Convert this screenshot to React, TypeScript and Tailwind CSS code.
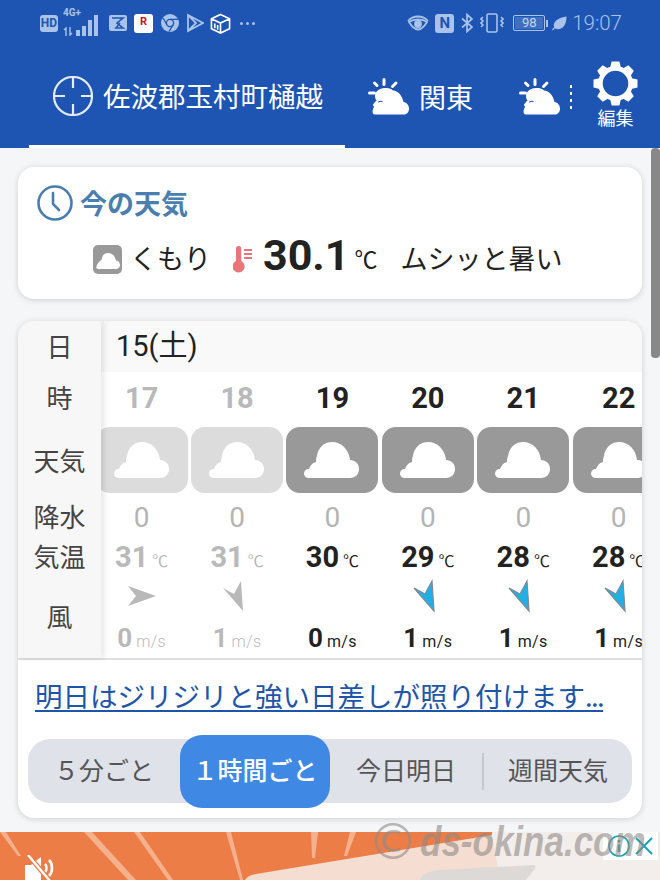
const cols = [
  { hour: "17", temp: "31", wind: "0", past: true, arrow: "right" },
  { hour: "18", temp: "31", wind: "1", past: true, arrow: "se" },
  { hour: "19", temp: "30", wind: "0", past: false, arrow: "none" },
  { hour: "20", temp: "29", wind: "1", past: false, arrow: "se" },
  { hour: "21", temp: "28", wind: "1", past: false, arrow: "se" },
  { hour: "22", temp: "28", wind: "1", past: false, arrow: "se" },
];

const CLOUD =
  "M23 51H64C69.5 51 73 47 73 42C73 36.5 69 33 64 33C63 23 56 15 46 15C38 15 32 21 31 29C30 31 30 33 30 35C26 36 24 39 23 42C20 42 18 44 18 46.5C18 49 20 51 23 51Z";

function SunCloud({ className }: { className: string }) {
  return (
    <svg viewBox="0 0 42 38" className={className} fill="white">
      <path d="M7 36.5H36C39 36.5 41 34 41 30.5C41 27 38.5 24.5 35.5 24C34 17 30 13 25 12.5C23.5 10.5 20 10 17 10C11 10 7 14 7 18C7 20.5 8 22.5 10 24C7 26.5 5 30 4.5 33C4.5 35 5 36.5 7 36.5Z" />
      <path d="M9.5 24.5C11 23.5 13 23 14.5 23.5" fill="none" stroke="#1e55b3" strokeWidth="1.2" />
      <path d="M16 1.5V6.5M6.5 5L9 7.5M1.5 15H6.5M6.5 27L9 24M28 5L24.5 8.5" stroke="white" strokeWidth="3" strokeLinecap="round" />
    </svg>
  );
}

function Gear() {
  return (
    <svg viewBox="0 0 44 44" className="w-[45px] h-[45px]">
      <circle cx="22" cy="22" r="14.75" fill="none" stroke="white" strokeWidth="4.5" />
      {[0, 45, 90, 135, 180, 225, 270, 315].map((a) => (
        <path key={a} d="M16.5 7.5L18.2 0.5H25.8L27.5 7.5Z" fill="white" transform={`rotate(${a} 22 22)`} />
      ))}
    </svg>
  );
}

function WindArrow({ kind, past }: { kind: string; past: boolean }) {
  if (kind === "none") return <div className="w-[30px] h-[34px]" />;
  if (kind === "right")
    return (
      <svg viewBox="0 0 30 34" className="w-[30px] h-[34px]">
        <polygon points="1,7 29,17 1,27 9,17" fill="#b9b9b9" />
      </svg>
    );
  return (
    <svg viewBox="0 0 30 34" className="w-[30px] h-[34px]">
      <polygon
        points="21,32 1,9 12,15 19,2"
        fill={past ? "#b9b9b9" : "#1fb0e8"}
        stroke={past ? "none" : "#7d8a94"}
        strokeWidth="1.2"
      />
    </svg>
  );
}

function StatusBar() {
  return (
    <div className="h-[46px] flex items-center pl-[40px] pr-[38px] text-[#a9c3ea] font-['Roboto',sans-serif]">
      <div className="w-[18px] h-[17px] rounded-[3px] bg-[#a9c3ea] text-[#1e55b3] text-[12px] font-bold leading-[17px] text-center">HD</div>
      <div className="ml-[5px] w-[38px] h-[26px] flex items-end gap-[2px] relative">
        <span className="absolute left-0 top-[-2px] text-[10px] font-bold leading-[10px]">4G+</span>
        <svg viewBox="0 0 10 9" className="absolute left-0 bottom-0 w-[10px] h-[9px]" fill="none" stroke="#a9c3ea" strokeWidth="1.4">
          <path d="M3 9V1L1 3M7 0V8L9 6" />
        </svg>
        <div className="ml-[13px] w-[4px] h-[6px] bg-[#a9c3ea]" />
        <div className="w-[4px] h-[10px] bg-[#a9c3ea]" />
        <div className="w-[4px] h-[16px] bg-[#a9c3ea]" />
        <div className="w-[4px] h-[21px] bg-[#a9c3ea]" />
      </div>
      <svg viewBox="0 0 18 16" className="ml-[8px] w-[18px] h-[16px]">
        <rect width="18" height="16" rx="2" fill="#a9c3ea" />
        <path d="M3 3H14L8 8L14 13H7L11 8" fill="none" stroke="#1e55b3" strokeWidth="1.6" />
      </svg>
      <div className="ml-[7px] w-[19px] h-[19px] rounded-[3px] bg-white text-[#c8102e] text-[11px] font-bold leading-[15px] text-center">R</div>
      <svg viewBox="0 0 18 18" className="ml-[8px] w-[18px] h-[18px]">
        <circle cx="9" cy="9" r="9" fill="#a9c3ea" />
        <circle cx="9" cy="9" r="3.6" fill="#a9c3ea" stroke="#1e55b3" strokeWidth="1.3" />
        <path d="M9 5.4H17M5.9 10.8L2 4M12.1 10.8L8 17.6" stroke="#1e55b3" strokeWidth="1.2" fill="none" />
      </svg>
      <svg viewBox="0 0 18 20" className="ml-[7px] w-[18px] h-[20px]" fill="none" stroke="#a9c3ea" strokeWidth="1.8">
        <path d="M2 2L17 10L2 18ZM2 2L10 10L2 18M6 14L10 10L6 6" />
      </svg>
      <svg viewBox="0 0 22 22" className="ml-[6px] w-[21px] h-[21px]" fill="none" stroke="white" strokeWidth="1.7">
        <path d="M11 1.5L20.5 6V16.5L11 21L1.5 16.5V6ZM1.5 6L11 10.5L20.5 6M11 10.5V21M5 11V16M8 12.5V17.5" />
      </svg>
      <div className="ml-[9px] flex gap-[3px]">
        <div className="w-[3px] h-[3px] rounded-full bg-[#a9c3ea]" />
        <div className="w-[3px] h-[3px] rounded-full bg-[#a9c3ea]" />
        <div className="w-[3px] h-[3px] rounded-full bg-[#a9c3ea]" />
      </div>
      <div className="ml-auto flex items-center">
        <svg viewBox="0 0 22 16" className="w-[22px] h-[16px]" fill="none" stroke="#a9c3ea" strokeWidth="1.8">
          <path d="M1 6C4 2.5 7 1.5 11 1.5S18 2.5 21 6" />
          <path d="M2 7C5 12 8 14.5 11 14.5S17 12 20 7C17 5 14 4.5 11 4.5S5 5 2 7Z" />
          <circle cx="11" cy="9" r="3" fill="#a9c3ea" />
        </svg>
        <div className="ml-[6px] w-[19px] h-[19px] rounded-[3px] bg-[#a9c3ea] text-[#1e55b3] text-[15px] font-bold leading-[19px] text-center">N</div>
        <svg viewBox="0 0 12 20" className="ml-[7px] w-[12px] h-[20px]" fill="none" stroke="#a9c3ea" strokeWidth="1.7">
          <path d="M1 5.5L11 14L6 18.5V1.5L11 6L1 14.5" />
        </svg>
        <svg viewBox="0 0 24 20" className="ml-[7px] w-[24px] h-[20px]" fill="none" stroke="#a9c3ea" strokeWidth="1.6">
          <rect x="7" y="1" width="10" height="18" rx="1.5" />
          <path d="M3 4L1 6L3 8L1 10L3 12L1 14M21 4L23 6L21 8L23 10L21 12L23 14" />
        </svg>
        <div className="ml-[9px] w-[32px] h-[16px] border border-[#a9c3ea] rounded-[2px] p-[1px]">
          <div className="h-full bg-[#3f6fbe] text-[#c4d6f1] text-[13px] leading-[12px] text-center">98</div>
        </div>
        <div className="ml-[1px] w-[2px] h-[7px] bg-[#a9c3ea]" />
        <svg viewBox="0 0 16 16" className="ml-[4px] w-[15px] h-[15px]" fill="#a9c3ea">
          <path d="M15.5 0.5C15.5 9 12 14 6 14C4.5 14 3.5 13.5 3 13L1 15.5L0 14.5L2.3 12C1 8 3 2.5 15.5 0.5Z" />
        </svg>
        <span className="ml-[5px] text-[20.5px] leading-none font-light">19:07</span>
      </div>
    </div>
  );
}

function Header() {
  return (
    <div className="h-[148px] shrink-0 bg-[#1e55b3] text-white flex flex-col">
      <StatusBar />
      <div className="flex-1 flex">
        <div className="ml-[29px] w-[316px] h-[102px] border-b-[3px] border-white flex items-center pl-[24px] gap-[10px] pt-[1px]">
          <svg viewBox="0 0 40 40" className="w-[40px] h-[40px]" fill="none" stroke="#e4ecf8" strokeWidth="2.2">
            <circle cx="20" cy="20" r="19" />
            <path d="M20 1V12M20 28V39M1 20H12M28 20H39" />
          </svg>
          <span className="text-[27.5px] leading-none whitespace-nowrap">佐波郡玉村町樋越</span>
        </div>
        <div className="ml-[23px] w-[151px] flex items-center">
          <SunCloud className="w-[42px] h-[38px]" />
          <span className="ml-[9px] pb-[2px] text-[27px] leading-none">関東</span>
        </div>
        <SunCloud className="w-[42px] h-[38px] self-center" />
        <div className="ml-[9px] self-center flex flex-col gap-[4px]">
          <div className="w-[2px] h-[3px] bg-white" />
          <div className="w-[2px] h-[3px] bg-white" />
          <div className="w-[2px] h-[3px] bg-white" />
          <div className="w-[2px] h-[3px] bg-white" />
        </div>
        <div className="ml-[21px] w-[45px] pt-[15px] flex flex-col items-center">
          <Gear />
          <span className="text-[18px] leading-[22px] whitespace-nowrap">編集</span>
        </div>
      </div>
    </div>
  );
}

function NowCard() {
  return (
    <div className="h-[132px] bg-white rounded-[16px] shadow-[0_1px_6px_rgba(0,0,0,0.16)] pt-[18px] pl-[19px]">
      <div className="flex items-center h-[36px]">
        <svg viewBox="0 0 36 36" className="w-[36px] h-[36px]" fill="none" stroke="#4a7eae" strokeWidth="2.6">
          <circle cx="18" cy="18" r="16.5" />
          <path d="M16 8V19L22 25" strokeLinecap="round" />
        </svg>
        <span className="ml-[7px] pb-[2px] text-[27px] leading-none font-bold text-[#4a7eae]">今の天気</span>
      </div>
      <div className="mt-[10px] pl-[56px] flex items-center h-[56px] text-[#222]">
        <svg viewBox="0 0 29 29" className="w-[29px] h-[29px]">
          <rect width="29" height="29" rx="5" fill="#999" />
          <path d="M5 24H23C25.5 24 27 22 27 20C27 17.5 25 15.5 23 15.5C22 11 19 8 15 8C11 8 9 11 8.5 15C6 16 5 18 4 20C3 22 3 24 5 24Z" fill="white" />
        </svg>
        <span className="ml-[8px] pb-[3px] text-[27px] leading-none">くもり</span>
        <svg viewBox="0 0 20 28" className="ml-[22px] w-[20px] h-[28px]">
          <path d="M3 3.5a2.6 2.6 0 0 1 5.2 0V16a6 6 0 1 1-5.2 0Z" fill="#e8747c" />
          <path d="M11 5H19M11 9H19M11 13H19" stroke="#e8747c" strokeWidth="2" />
        </svg>
        <span className="ml-[10px] pb-[8px] text-[43px] leading-none font-bold font-['Roboto','Liberation_Sans',sans-serif]">30.1</span>
        <span className="ml-[5px] pb-[1px] text-[23px] leading-none">℃</span>
        <span className="ml-[23px] pb-[3px] text-[27px] leading-none whitespace-nowrap">ムシッと暑い</span>
      </div>
    </div>
  );
}

function ForecastTable() {
  return (
    <div className="flex h-[337px] border-b-2 border-[#dfdfdf] box-content">
      <div className="w-[83px] shrink-0 bg-[#f7f7f7] text-[#444] text-[26px] leading-none flex flex-col items-center z-10 shadow-[3px_0_6px_rgba(0,0,0,0.1)]">
        <div className="h-[51px] pb-[2px] flex items-center">日</div>
        <div className="h-[53px] pb-[4px] flex items-center">時</div>
        <div className="h-[74px] pb-[4px] flex items-center">天気</div>
        <div className="h-[40px] pb-[6px] flex items-center">降水</div>
        <div className="h-[40px] pb-[6px] flex items-center">気温</div>
        <div className="h-[79px] pb-[6px] flex items-center">風</div>
      </div>
      <div className="flex-1 min-w-0 overflow-hidden flex flex-col">
        <div className="h-[51px] shrink-0 bg-[#f9f9f9] pl-[15px] flex items-center text-[29px] leading-none text-[#222] font-['Roboto','Noto_Sans_CJK_JP',sans-serif]">15(土)</div>
        <div className="flex -ml-[7px]">
          {cols.map((c) => (
            <div
              key={c.hour}
              className={`w-[95.4px] shrink-0 flex flex-col items-center font-['Roboto','Noto_Sans_CJK_JP',sans-serif] ${c.past ? "text-[#b9b9b9]" : "text-[#222]"}`}
            >
              <div className="h-[53px] flex items-center text-[29px] font-bold leading-none">{c.hour}</div>
              <div className="mt-[2px] w-[92px] h-[66px] rounded-[14px] overflow-hidden">
                <svg viewBox="0 0 92 66" className="w-[92px] h-[66px]">
                  <rect width="92" height="66" fill={c.past ? "#dcdcdc" : "#999999"} />
                  <path d={CLOUD} fill="white" />
                </svg>
              </div>
              <div className="h-[48px] pt-[1px] flex items-center text-[28px] leading-none text-[#b4b4b4]">0</div>
              <div className="h-[32px] flex items-baseline">
                <span className="text-[29px] font-bold leading-[32px]">{c.temp}</span>
                <span className="ml-[4px] text-[16px] leading-none">℃</span>
              </div>
              <div className="h-[46px] flex items-center">
                <WindArrow kind={c.arrow} past={c.past} />
              </div>
              <div className="h-[38px] flex items-baseline">
                <span className="text-[26px] font-bold leading-[38px]">{c.wind}</span>
                <span className={`ml-[4px] text-[16px] leading-none tracking-[0.4px] ${c.past ? "font-light" : ""}`}>m/s</span>
              </div>
            </div>
          ))}
        </div>
      </div>
    </div>
  );
}

function RangeTabs() {
  return (
    <div className="mx-[10px] h-[64px] mt-[27px] rounded-[22px] bg-[#dfe2e9] flex items-center text-[25px] leading-none text-[#555]">
      <div className="w-[152px] pb-[3px] text-center whitespace-nowrap">５分ごと</div>
      <div className="w-[150px] h-[73px] pb-[3px] rounded-[22px] bg-[#3f88e4] text-white font-medium flex items-center justify-center whitespace-nowrap">１時間ごと</div>
      <div className="w-[152px] pb-[3px] text-center whitespace-nowrap">今日明日</div>
      <div className="w-[2px] h-[37px] bg-[#c4c8cf]" />
      <div className="w-[148px] pb-[3px] text-center whitespace-nowrap">週間天気</div>
    </div>
  );
}

function AdBanner() {
  return (
    <div className="h-[48px] mt-[14px] relative bg-[#ec7d47] overflow-hidden">
      <svg viewBox="0 0 660 48" className="absolute inset-0 w-[660px] h-[48px]">
        <path d="M0 0L18 24L21 24L6 0ZM84 0L128 48H136L92 0ZM134 0L168 48H173L140 0ZM226 0L240 48H243L231 0ZM311 0L312 26L315 26L318 0ZM350 0L344 24L347 24L356 0Z" fill="#f5b08c" />
        <path d="M245 48C247 45 250 43 256 42L492 3V0H660V48Z" fill="#f6ddd2" />
        <path d="M492 3V0H660V48H500Z" fill="#f3eeeb" />
        <path d="M420 48C422 42 428 39 440 38L534 33C536 33 536 36 534 38L526 48Z" fill="#dcd9d6" />
      </svg>
      <svg viewBox="0 0 32 26" className="absolute left-[24px] top-[23px] w-[32px] h-[26px]">
        <path d="M1 10H7L17 2V26H1Z" fill="white" />
        <path d="M21 9C23 11 23 15 21 17M25 5C29 9 29 17 25 21" fill="none" stroke="white" strokeWidth="2.6" />
        <path d="M4 0L26 26" stroke="#ec7d47" strokeWidth="5" />
        <path d="M4 0L26 26" stroke="white" strokeWidth="2.4" />
      </svg>
      <div className="absolute right-[2px] top-0 w-[55px] h-[28px] bg-white flex items-center justify-center gap-[5px]">
        <svg viewBox="0 0 22 22" className="w-[22px] h-[22px]" fill="none" stroke="#17a2b8" strokeWidth="1.6">
          <circle cx="11" cy="11" r="10" />
          <path d="M11 9.5V17M11 5V7.5" strokeWidth="2.4" />
        </svg>
        <svg viewBox="0 0 18 18" className="w-[18px] h-[18px]" fill="none" stroke="#17a2b8" strokeWidth="2">
          <path d="M1 1L17 17M17 1L1 17" />
        </svg>
      </div>
    </div>
  );
}

export default function App() {
  return (
    <div className="relative w-[660px] h-[880px] overflow-hidden bg-[#f5f6f8] flex flex-col font-['Noto_Sans_CJK_JP','Roboto',sans-serif]">
      <Header />
      <div className="px-[18px] pt-[19px] flex flex-col gap-[22px]">
        <NowCard />
        <div className="h-[497px] bg-white rounded-[16px] shadow-[0_1px_6px_rgba(0,0,0,0.16)] overflow-hidden">
          <ForecastTable />
          <a className="block ml-[17px] mt-[18px] text-[27.5px] leading-[34px] text-[#1e55a8] underline underline-offset-[3px] whitespace-nowrap">
            明日はジリジリと強い日差しが照り付けます<span className="tracking-[-1.6px]">...</span>
          </a>
          <RangeTabs />
        </div>
      </div>
      <AdBanner />
      {/* scrollbar */}
      <div className="absolute right-0 top-[148px] w-[9px] h-[210px] rounded-[4px] bg-[#888888]" />
      {/* watermark */}
      <div className="absolute left-[368px] top-[818px] flex items-center whitespace-nowrap text-[#8f8a86]/60 font-['Liberation_Sans',sans-serif] italic font-bold">
        <span className="text-[50px] leading-[48px] not-italic font-normal font-['DejaVu_Sans',sans-serif]">©</span>
        <span className="ml-[2px] text-[35px] leading-[48px] scale-y-[1.2] origin-center">ds-okina.com</span>
      </div>
    </div>
  );
}
